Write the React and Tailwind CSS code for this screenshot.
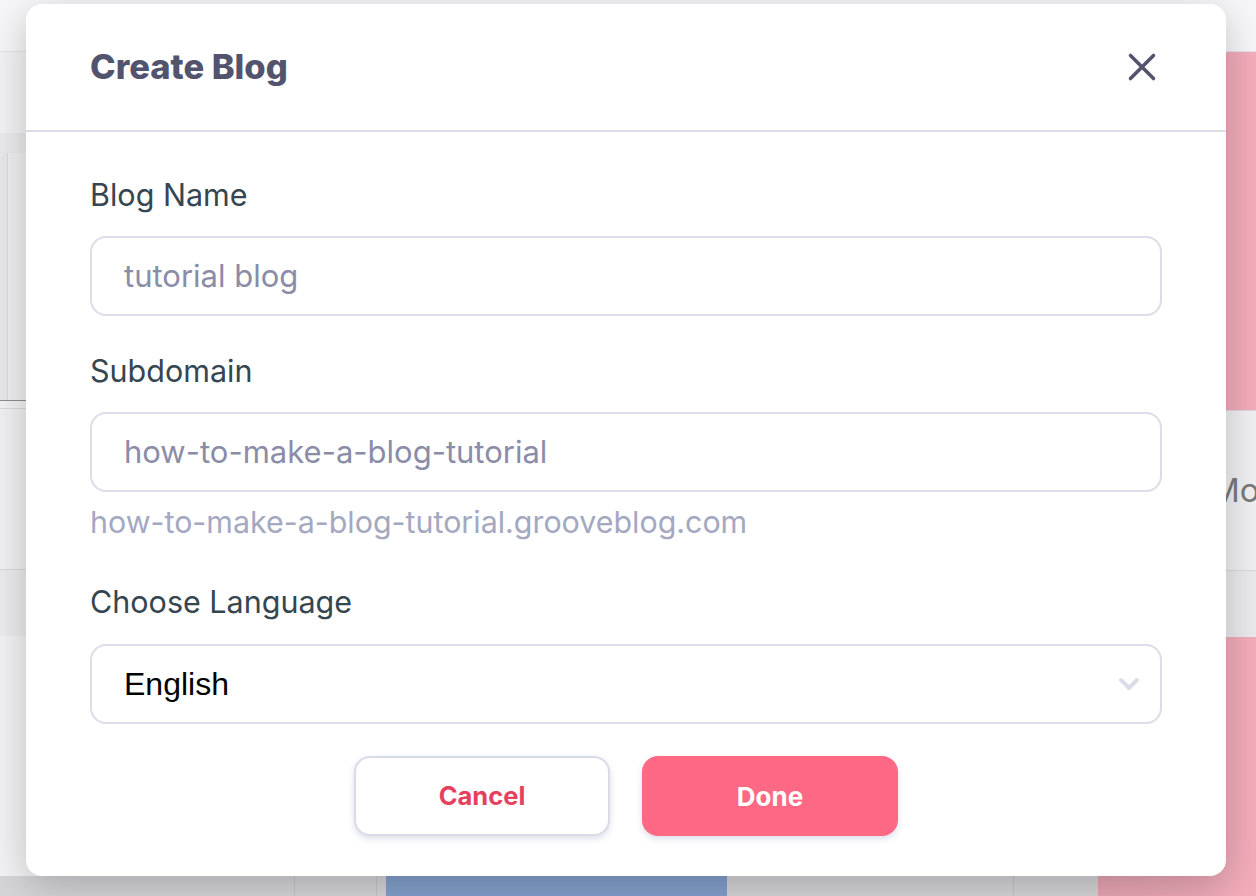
const Field = ({ label, value, hint, className = "" }) => (
  <div className={`flex flex-col ${className}`}>
    <label className="text-[30.5px] leading-[40px] text-[#354651]">{label}</label>
    <div className="mt-[21px] h-[80px] flex items-center px-[32px] border-2 border-[#dddce9] rounded-[16px]">
      <span className="text-[31px] leading-[40px] text-[#8a8ca8]">{value}</span>
    </div>
    {hint && (
      <p className="mt-[10px] text-[30.4px] leading-[40px] text-[#a4a8c1]">{hint}</p>
    )}
  </div>
);

const Backdrop = () => (
  <div className="w-[1256px] h-[896px] flex flex-col bg-[#f3f3f5] overflow-hidden">
    <div className="h-[52px] shrink-0 bg-[#f7f7f9] border-b border-[#e4e4e8]" />
    <div className="flex flex-1">
      <div className="flex-1 flex flex-col">
        <div className="h-[81px] bg-[#f3f3f5]" />
        <div className="h-[20px] bg-[#ebebee]" />
        <div className="h-[247px] flex bg-[#f0f0f2]">
          <div className="w-[8px] bg-[#e9e9ec] border-r border-[#dcdce0]" />
        </div>
        <div className="h-[9px] border-t border-[#8e8e90] border-b border-b-[#dadade] bg-[#f2f2f4]" />
        <div className="h-[160px] bg-[#f1f1f3]" />
        <div className="h-[67px] bg-[#ececef] border-t border-[#dadade]" />
        <div className="flex-1 flex items-end bg-[#f3f3f5]">
          <div className="h-[20px] w-full flex bg-[#d6d6d8]">
            <div className="w-[295px] border-r border-[#c6c6ca]" />
            <div className="w-[82px] border-r border-[#c6c6ca]" />
            <div className="w-[9px]" />
            <div className="w-[341px] bg-[#84a0cd]" />
            <div className="w-[287px] border-r border-[#c6c6ca]" />
          </div>
        </div>
      </div>
      <div className="w-[158px] flex flex-col">
        <div className="h-[358px] bg-gradient-to-r from-[#e8a6b4] to-[#f4adbb]" />
        <div className="h-[160px] flex items-center pl-[112px] bg-[#f1f1f3] border-t border-[#dadade]">
          <span className="text-[33px] text-[#7a7a7a]">More</span>
        </div>
        <div className="h-[67px] bg-[#ebebee] border-t border-[#dadade]" />
        <div className="flex-1 bg-gradient-to-r from-[#e8a6b4] to-[#f4adbb]" />
      </div>
    </div>
  </div>
);

export default function App() {
  return (
    <div className="relative w-[1256px] h-[896px] overflow-hidden font-['Inter',sans-serif]">
      <Backdrop />
      <div className="absolute left-[26px] top-[4px] w-[1200px] h-[872px] bg-white rounded-[16px] shadow-[0_10px_40px_rgba(0,0,0,0.22)] flex flex-col">
        <div className="h-[128px] shrink-0 flex items-center justify-between pl-[64px] pr-[68px] border-b-2 border-[#dcdae6]">
          <h2 className="text-[34.5px] leading-[40px] font-extrabold text-[#52546e]">Create Blog</h2>
          <button className="w-[32px] h-[32px] flex items-center justify-center">
            <svg width="32" height="32" viewBox="0 0 32 32" fill="none" stroke="#52546e" strokeWidth="3.6" strokeLinecap="round">
              <path d="M4.5 4.5 L27.5 27.5 M27.5 4.5 L4.5 27.5" />
            </svg>
          </button>
        </div>
        <div className="flex flex-col px-[64px] pt-[43px] pb-[40px]">
          <Field label="Blog Name" value="tutorial blog" />
          <Field
            className="mt-[35px]"
            label="Subdomain"
            value="how-to-make-a-blog-tutorial"
            hint="how-to-make-a-blog-tutorial.grooveblog.com"
          />
          <div className="mt-[40px] flex flex-col">
            <label className="text-[30.5px] leading-[40px] text-[#354651]">Choose Language</label>
            <div className="mt-[22px] h-[80px] flex items-center justify-between pl-[32px] pr-[20px] border-2 border-[#dddce9] rounded-[16px]">
              <span className="text-[32px] leading-[40px] text-black font-['Liberation_Sans',sans-serif]">English</span>
              <svg width="22" height="16" viewBox="0 0 22 16" fill="none" stroke="#dcdbe9" strokeWidth="4" strokeLinecap="round" strokeLinejoin="round">
                <path d="M3 4 L11 12 L19 4" />
              </svg>
            </div>
          </div>
          <div className="mt-[32px] flex justify-center gap-[32px]">
            <button className="w-[256px] h-[80px] rounded-[16px] bg-white border-2 border-[#d9dbe8] shadow-[0_3px_6px_rgba(120,130,170,0.25)] text-[25.5px] font-bold text-[#e6405f]">
              Cancel
            </button>
            <button className="w-[256px] h-[80px] rounded-[16px] bg-[#fd6884] shadow-[0_3px_6px_rgba(120,130,170,0.25)] text-[26px] font-bold text-white">
              Done
            </button>
          </div>
        </div>
      </div>
    </div>
  );
}
